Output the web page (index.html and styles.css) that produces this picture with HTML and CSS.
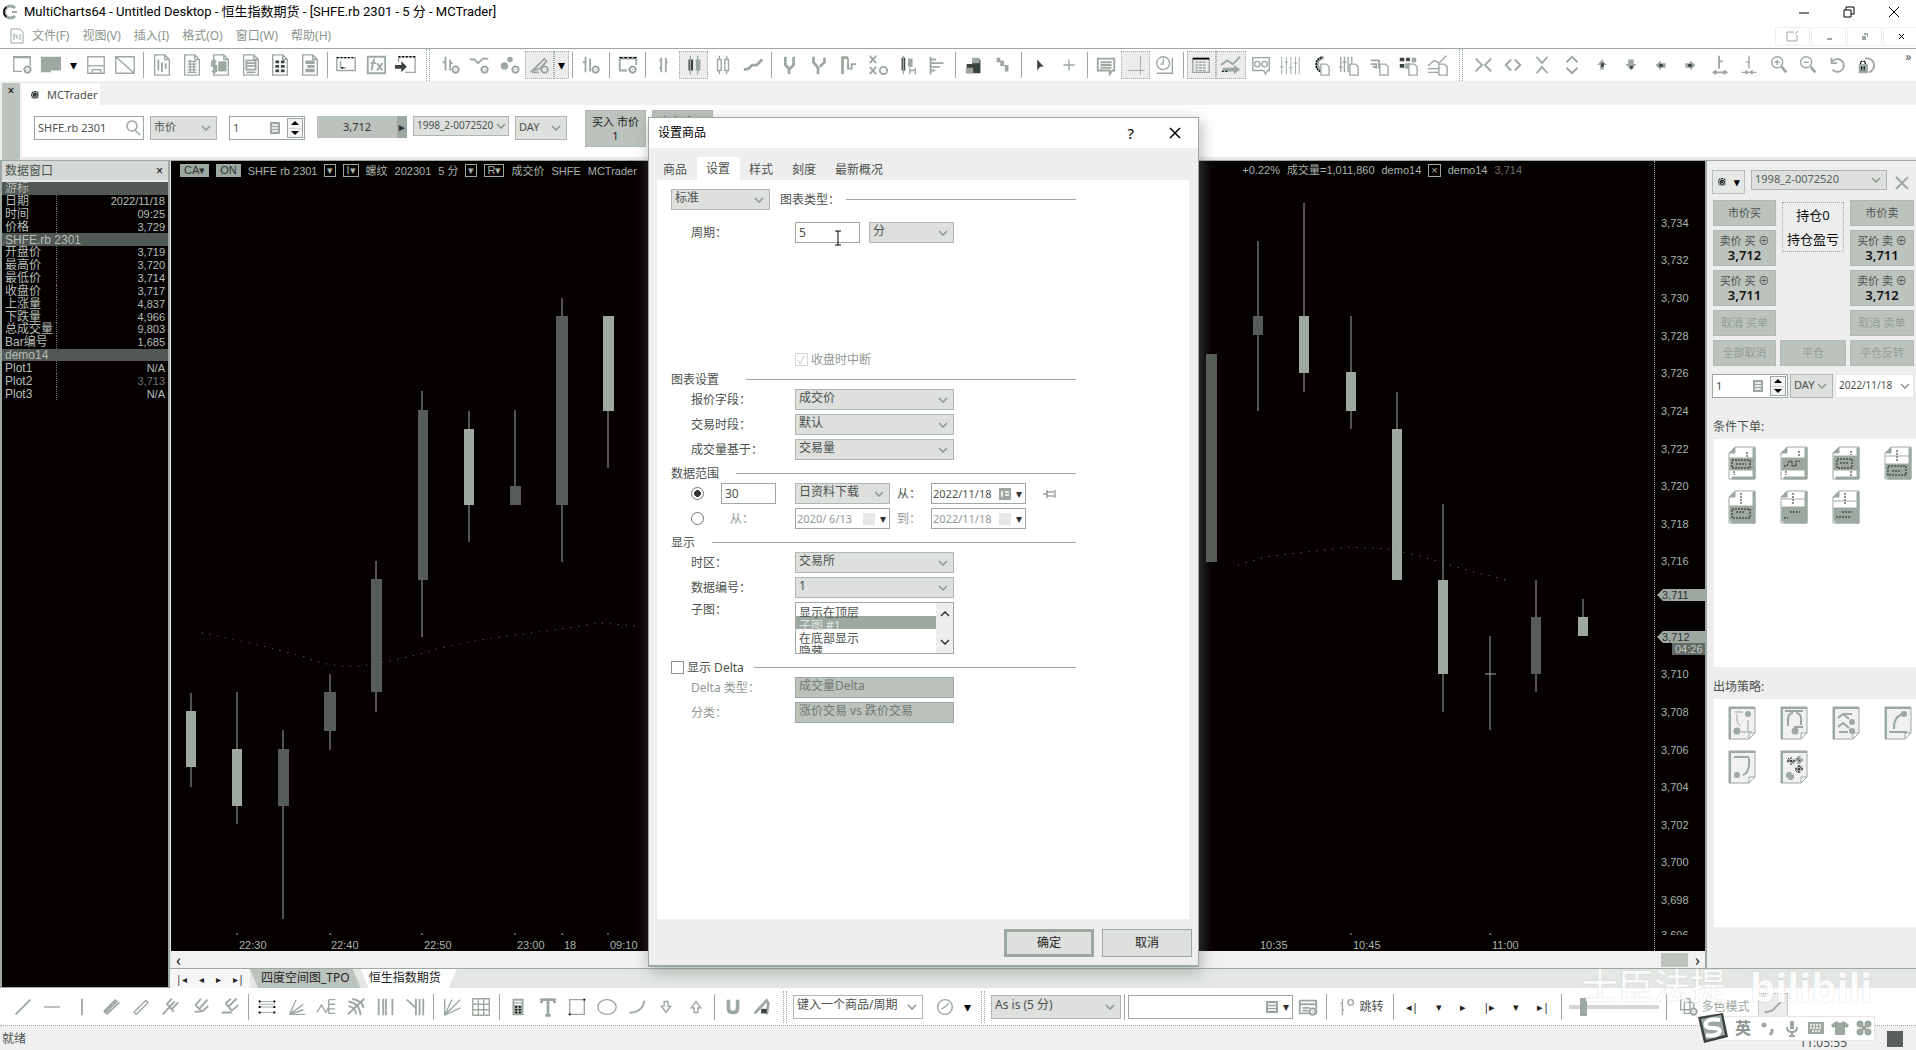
FILE: index.html
```html
<!DOCTYPE html>
<html lang="zh-CN">
<head>
<meta charset="utf-8">
<title>MultiCharts64</title>
<link rel="stylesheet" href="styles.css">
</head>
<body>
<svg class="defs" aria-hidden="true">
  <symbol id="doc" viewBox="0 0 24 24"><path d="M4 1h11l5 5v17H4zM15 1v5h5"/></symbol>
  <symbol id="gear" viewBox="0 0 24 24"><circle class="f" cx="17" cy="17" r="4.500"/><circle class="w" cx="17" cy="17" r="1.500"/></symbol>
  <symbol id="page" viewBox="0 0 24 24"><path class="wf" d="M13 11h6l3 3v9h-9z"/></symbol>
  <symbol id="cond" viewBox="0 0 28 34"><path class="wf" d="M7 1h20v32H1V7z"/><path class="f2" d="M7 1v6H1zM25 2h2v31H4v-2h21z"/></symbol>
  <symbol id="exit" viewBox="0 0 28 34"><path class="paper" d="M1 1h26v26l-6 6H1z"/><path class="f" d="M1 1h26v2H3v30H1z"/><path class="wf" d="M21 33v-6h6z"/></symbol>
  <symbol id="target" viewBox="0 0 10 10"><circle class="f" cx="5" cy="5" r="4"/><path d="M5 1v8M1 5h8M2 2l6 6M8 2 2 8" stroke-dasharray="1"/></symbol>
</svg>
<div class="app">
  <header class="titlebar">
    <svg class="logo" viewBox="0 0 16 16"><path d="M13 4A6 6 0 1 0 13 12" stroke-width="3"/><path class="k" d="M4 3 2 6v4l2 3" /><path d="M10 8h5" stroke-width="2"/></svg>
    <h1>MultiCharts64 - Untitled Desktop - 恒生指数期货 - [SHFE.rb 2301 - 5 分 - MCTrader]</h1>
    <div class="winbtns">
      <button><svg viewBox="0 0 12 12"><path d="M1 7h10"/></svg></button>
      <button><svg viewBox="0 0 12 12"><path d="M1 4h7v7H1zM3 4V1h8v7H8"/></svg></button>
      <button><svg viewBox="0 0 12 12"><path d="m1 1 10 10M11 1 1 11"/></svg></button>
    </div>
  </header>
  <nav class="menubar">
    <svg class="menuicon" viewBox="0 0 14 16"><path d="M1 1h9l3 3v11H1zM4 5v7M7 7v4M10 6v6M4 8h3"/></svg>
    <a href="#">文件(F)</a><a href="#">视图(V)</a><a href="#">插入(I)</a><a href="#">格式(O)</a><a href="#">窗口(W)</a><a href="#">帮助(H)</a>
    <div class="mdibtns">
      <button><svg viewBox="0 0 14 12"><path d="M8 2H1v9h10V5M9 4l3-3"/></svg></button>
      <button><svg viewBox="0 0 14 12"><path d="M5 9h5" stroke-width="2"/></svg></button>
      <button><svg viewBox="0 0 14 12"><path class="f" d="M4 6h4v4H4zM6 3h4v4H9V5H6z"/></svg></button>
      <button><svg viewBox="0 0 14 12"><path class="k" d="m5 4 5 5M10 4 5 9"/></svg></button>
    </div>
  </nav>
  <div class="toolbar top">
    <button class="tb"><svg viewBox="0 0 24 24"><path d="M21 13V3H3v16h9M3 4h18"/><use href="#gear" x="1"/></svg></button>
    <button class="tb"><svg viewBox="0 0 24 24"><path class="f" d="M1 3h22v15H12v2H1z"/></svg></button>
    <button class="drop">▾</button>
    <button class="tb"><svg viewBox="0 0 24 24"><path d="M3 3h18v18H3zM3 13h18M8 21v-4h9v4"/></svg></button>
    <button class="tb"><svg viewBox="0 0 24 24"><path d="M2 3h20v18H2zM2 3l20 18"/></svg></button>
    <i class="sep"></i>
    <button class="tb"><svg viewBox="0 0 24 24"><use href="#doc"/><path d="M8 6v12M12 9v11M16 10v6" stroke-width="2"/></svg></button>
    <button class="tb"><svg viewBox="0 0 24 24"><use href="#doc"/><path d="M7 8h10M7 11h10M7 14h10M7 17h10M7 20h10M10 6v15M14 8v13"/></svg></button>
    <button class="tb"><svg viewBox="0 0 24 24"><use href="#doc"/><path class="f" d="M9 8h9v11H9z"/><path d="M7 8H2v5h5v6H2M5 6v15" stroke-width="2"/></svg></button>
    <button class="tb"><svg viewBox="0 0 24 24"><use href="#doc"/><path d="M7 7h10v10H7zM7 10h10M7 13h10M7 20h10" stroke-width="2"/></svg></button>
    <button class="tb"><svg viewBox="0 0 24 24"><use href="#doc"/><path class="kf" d="M7 7h4v3H7zM13 7h4v3h-4zM7 12h4v3H7zM13 12h4v3h-4zM7 17h4v3H7zM13 17h4v3h-4z"/></svg></button>
    <button class="tb"><svg viewBox="0 0 24 24"><use href="#doc"/><path class="f" d="M7 7h10v4H7zM9 12h8v3H9zM7 16h10v4H7z"/></svg></button>
    <i class="sep"></i>
    <button class="tb"><svg viewBox="0 0 24 24"><path d="M2 4h20v14H2zM6 8v7h6"/><path class="k" d="M2 4h20M7 15h4" stroke-dasharray="2"/></svg></button>
    <button class="tb"><svg viewBox="0 0 24 24"><path d="M3 3h19v18H3zM11 6c-3 0-2 5-4 12M6 10h6M13 10l6 8M19 10l-6 8" stroke-width="2"/></svg></button>
    <button class="tb"><svg viewBox="0 0 24 24"><path d="M5 9V3h18v17H12"/><path class="k" d="M5 3h18" stroke-dasharray="2"/><path class="kf" d="M1 12h7V8l6 6-6 6v-4H1z"/></svg></button>
    <i class="sep2"></i>
    <button class="tb"><svg viewBox="0 0 24 24"><path d="M6 3v15M11 6v12M3 9h3M11 10h3" stroke-width="2"/><use href="#gear"/></svg></button>
    <button class="tb"><svg viewBox="0 0 24 24"><path d="M1 6h5l4 4 5-5h6" stroke-width="2"/><use href="#gear"/></svg></button>
    <button class="tb"><svg viewBox="0 0 24 24"><circle class="f" cx="12" cy="6" r="3"/><circle class="f" cx="6" cy="13" r="4"/><use href="#gear" x="1"/></svg></button>
    <button class="tb on"><svg viewBox="0 0 24 24"><path d="m4 18 13-13 2 3-7 8zM3 20h8" stroke-width="2"/><use href="#gear"/></svg></button>
    <button class="drop on">▾</button>
    <i class="sep"></i>
    <button class="tb"><svg viewBox="0 0 24 24"><path d="M6 3v17M11 5v14M3 9h3" stroke-width="2"/><use href="#gear"/></svg></button>
    <i class="sep"></i>
    <button class="tb"><svg viewBox="0 0 24 24"><path d="M21 12V4H3v14h8M3 5h18" stroke-width="2"/><path class="k" d="M3 4h18" stroke-dasharray="3 2"/><use href="#gear"/></svg></button>
    <i class="sep"></i>
    <button class="tb"><svg viewBox="0 0 24 24"><path d="M9 4v16M14 4v16M7 7h2M7 15h2M14 9h2" stroke-width="2"/></svg></button>
    <button class="tb on"><svg viewBox="0 0 24 24"><path class="kf" d="M6 6h5v12H6z"/><path class="f" d="M14 6h5v12h-5z"/><path d="M8 2v20M16 2v20"/></svg></button>
    <button class="tb"><svg viewBox="0 0 24 24"><path d="M6 6h4v12H6zM14 6h4v12h-4zM8 2v4M8 18v4M16 2v4M16 18v4"/></svg></button>
    <button class="tb"><svg viewBox="0 0 24 24"><path d="m2 17 5-1 4-4 5 0 6-6" stroke-width="3"/></svg></button>
    <i class="sep"></i>
    <button class="tb"><svg viewBox="0 0 24 24"><path d="M8 3v9l4 4M17 3v9l-4 4" stroke-width="3"/><path d="M12 14v8" stroke-width="3"/></svg></button>
    <button class="tb"><svg viewBox="0 0 24 24"><path d="M6 3v6l5 6v7M18 4v5l-5 5" stroke-width="3"/></svg></button>
    <button class="tb"><svg viewBox="0 0 24 24"><path d="M6 22V4h6" stroke-width="3"/><path d="M12 4v12h4v-5h5" stroke-width="2"/></svg></button>
    <button class="tb"><svg viewBox="0 0 24 24"><path d="m3 2 7 8M10 2 3 10M3 14l7 8M10 14l-7 8" stroke-width="2"/><circle cx="18" cy="18" r="4" stroke-width="2"/></svg></button>
    <button class="tb"><svg viewBox="0 0 24 24"><path class="kf" d="M5 4h4v14H5z"/><path class="f" d="M12 5h5v9h-5z"/><path d="M7 2v20M14 15v7M20 15v7M14 18h6"/></svg></button>
    <button class="tb"><svg viewBox="0 0 24 24"><path d="M5 3v19M5 6h6M5 10h14M5 14h10M5 18h5" stroke-width="2"/></svg></button>
    <i class="sep"></i>
    <button class="tb"><svg viewBox="0 0 24 24"><path class="kf" d="M4 11h6V6h9v15H4z"/><path class="f" d="M10 4h8v6h-8zM3 15h8v6H3z"/></svg></button>
    <button class="tb"><svg viewBox="0 0 24 24"><path class="f" d="M5 4h4v3h4v5h5v7h-4v-6H9V9H5z"/></svg></button>
    <i class="sep"></i>
    <button class="tb"><svg viewBox="0 0 24 24"><path class="kf" d="m9 6 7 8h-4l-3 4z"/></svg></button>
    <button class="tb"><svg viewBox="0 0 24 24"><path d="M12 6v12M6 12h12"/></svg></button>
    <i class="sep"></i>
    <button class="tb"><svg viewBox="0 0 24 24"><path d="M3 5h18v13h-2l-3 4v-4H3zM6 9h12M6 12h12M6 15h12" stroke-width="2"/></svg></button>
    <button class="tb on"><svg viewBox="0 0 24 24"><path d="M18 2v20M4 18h18" stroke-width="1"/></svg></button>
    <button class="tb"><svg viewBox="0 0 24 24"><circle cx="10" cy="10" r="7"/><path d="M10 5v6H7M3 21h18M20 4v18"/></svg></button>
    <i class="sep"></i>
    <button class="tb on"><svg viewBox="0 0 24 24"><path d="M3 5h18v15H3z"/><path class="k" d="M3 5h18" stroke-width="2"/><path d="M6 9h12M6 12h12M6 15h12M6 18h12" stroke-dasharray="3 1"/></svg></button>
    <button class="tb on"><svg viewBox="0 0 24 24"><path d="m1 12 7-5 6 4 8-8" stroke-width="2"/><path class="f" d="M3 15h12v-3l7 5-7 5v-3H3z"/><path class="k" d="M2 19h8" stroke-dasharray="2"/></svg></button>
    <button class="tb"><svg viewBox="0 0 24 24"><path d="M3 4h18v14h-2l-2 4-2-4H3z"/><circle cx="8" cy="11" r="3"/><circle cx="16" cy="11" r="3"/></svg></button>
    <button class="tb"><svg viewBox="0 0 24 24"><path d="M3 3v19M8 3v19M13 3v19M18 3v19M22 3v19M1 14h4M6 9h4M11 15h4M16 10h4" stroke-width="1"/></svg></button>
    <button class="tb"><svg viewBox="0 0 24 24"><path d="M16 4c-9 0-9 12-2 15" stroke-width="4"/><path class="k" d="M14 4c-8 1-8 12-2 15" stroke-dasharray="2 1"/><use href="#page"/></svg></button>
    <button class="tb"><svg viewBox="0 0 24 24"><path d="M3 3v17M7 3v17M11 3v17M15 3v9M1 14h4M5 9h4"/><use href="#page"/></svg></button>
    <button class="tb"><svg viewBox="0 0 24 24"><path d="M3 7h9v9M3 11h6v5M5 14h4" stroke-width="2"/><use href="#page"/></svg></button>
    <button class="tb"><svg viewBox="0 0 24 24"><path class="kf" d="M3 4h5v4H3zM10 4h4v4h-4zM3 11h5v4H3z"/><path class="f" d="M16 4h5v5h-5zM9 10h5v6H9z"/><use href="#page"/></svg></button>
    <button class="tb"><svg viewBox="0 0 24 24"><path d="m1 13 7-6 5 3 8-8M1 16h12M1 20h12"/><use href="#page"/></svg></button>
    <i class="sep2"></i>
    <button class="tb"><svg viewBox="0 0 24 24"><path d="m4 5 7 7-7 7M21 5l-7 7 7 7" stroke-width="2"/></svg></button>
    <button class="tb"><svg viewBox="0 0 24 24"><path d="m10 6-6 6 6 6M14 6l6 6-6 6" stroke-width="2"/></svg></button>
    <button class="tb"><svg viewBox="0 0 24 24"><path d="m6 3 6 7 6-7M6 21l6-7 6 7" stroke-width="2"/></svg></button>
    <button class="tb"><svg viewBox="0 0 24 24"><path d="m6 9 6-6 6 6M6 15l6 6 6-6" stroke-width="2"/></svg></button>
    <button class="tb"><svg viewBox="0 0 24 24"><path class="f" d="m12 6 5 6h-3v5h-4v-5H7z"/><path class="kf" d="M11 10h3v4h-3z"/></svg></button>
    <button class="tb"><svg viewBox="0 0 24 24"><path class="f" d="M9 6h6v5h3l-6 7-6-7h3z"/><path class="kf" d="M11 13h3v3h-3z"/></svg></button>
    <button class="tb"><svg viewBox="0 0 24 24"><path class="f" d="m6 12 6-5v3h5v5h-5v3z"/><path class="kf" d="M10 11h4v3h-4z"/></svg></button>
    <button class="tb"><svg viewBox="0 0 24 24"><path class="f" d="m18 12-6-5v3H7v5h5v3z"/><path class="kf" d="M10 11h4v3h-4z"/></svg></button>
    <button class="tb"><svg viewBox="0 0 24 24"><path d="M11 2v14M11 8h4M5 20h14M8 18l-3 2 3 2M16 18l3 2-3 2" stroke-width="2"/></svg></button>
    <button class="tb"><svg viewBox="0 0 24 24"><path d="M12 2v14M9 9h3M4 20h6M14 20h6M8 18l3 2-3 2M16 18l-3 2 3 2"/></svg></button>
    <button class="tb"><svg viewBox="0 0 24 24"><circle cx="10" cy="9" r="6"/><path d="M10 6v6M7 9h6"/><path d="m15 14 5 6" stroke-width="3"/></svg></button>
    <button class="tb"><svg viewBox="0 0 24 24"><circle cx="10" cy="9" r="6"/><path d="M7 9h6"/><path d="m15 14 5 6" stroke-width="3"/></svg></button>
    <button class="tb"><svg viewBox="0 0 24 24"><path d="M5 4v6h6M6 8a7 7 0 1 1 0 9" stroke-width="2"/></svg></button>
    <button class="tb"><svg viewBox="0 0 24 24"><path class="f" d="M3 11h10v10H3z"/><path class="k" d="M5 11V8h5v3M6 14v4M9 14v4" stroke-dasharray="2 1"/><path d="M10 5a7 7 0 1 1 4 15" stroke-width="2"/></svg></button>
    <span class="more">»</span>
  </div>
  <section class="trader">
    <div class="strip"><button>×</button></div>
    <div class="tradermain">
      <div class="tabstrip"><a href="#" class="tab"><svg viewBox="0 0 10 10"><use href="#target"/></svg>MCTrader</a></div>
      <div class="orderbar">
        <div class="pair">
          <div class="field search"><input aria-label="symbol" value="SHFE.rb 2301"><svg viewBox="0 0 16 16"><circle cx="7" cy="6" r="5"/><path d="m10 10 5 5"/></svg></div>
          <select class="sel w67" aria-label="order type"><option>市价</option></select>
        </div>
        <div class="field spin w76"><input aria-label="quantity" value="1"><svg viewBox="0 0 12 14"><path class="f" d="M1 1h10v12H1z"/><path class="w" d="M3 4h6M3 7h6M3 10h6"/></svg><span class="updown"><button><svg viewBox="0 0 8 4"><path d="M0 4 4 0l4 4z"/></svg></button><button><svg viewBox="0 0 8 4"><path d="m0 0 4 4 4-4z"/></svg></button></span></div>
        <div class="pair">
          <button class="pricebtn"><span>3,712</span><b>▸</b></button>
          <select class="sel short acct w96" aria-label="account"><option>1998_2-0072520</option></select>
          <select class="sel w52" aria-label="duration"><option>DAY</option></select>
        </div>
        <div class="pair">
          <button class="bigbtn">买入 市价<b>1</b></button>
          <button class="bigbtn">卖出 市价<b>1</b></button>
        </div>
      </div>
    </div>
  </section>
  <main class="workspace">
    <aside class="datawin">
      <div class="dwhead"><h2>数据窗口</h2><button>×</button></div>
      <table>
        <tr class="g"><th colspan="2">游标</th></tr>
        <tr><th>日期</th><td>2022/11/18</td></tr>
        <tr><th>时间</th><td>09:25</td></tr>
        <tr><th>价格</th><td>3,729</td></tr>
        <tr class="g"><th colspan="2">SHFE.rb 2301</th></tr>
        <tr><th>开盘价</th><td>3,719</td></tr>
        <tr><th>最高价</th><td>3,720</td></tr>
        <tr><th>最低价</th><td>3,714</td></tr>
        <tr><th>收盘价</th><td>3,717</td></tr>
        <tr><th>上涨量</th><td>4,837</td></tr>
        <tr><th>下跌量</th><td>4,966</td></tr>
        <tr><th>总成交量</th><td>9,803</td></tr>
        <tr><th>Bar编号</th><td>1,685</td></tr>
        <tr class="g"><th colspan="2">demo14</th></tr>
        <tr><th>Plot1</th><td>N/A</td></tr>
        <tr><th>Plot2</th><td class="dim">3,713</td></tr>
        <tr><th>Plot3</th><td>N/A</td></tr>
      </table>
    </aside>
    <div class="center">
      <div class="upper">
        <section class="chart">
          <div class="plotrow">
            <div class="plot">
              <div class="legend">
                <span class="tag">CA▾</span><span class="tag">ON</span><span>SHFE rb 2301</span><span class="bx">▾</span><span class="bx">I▾</span><span>螺纹</span><span>202301</span><span>5 分</span><span class="bx">▾</span><span class="bx">R▾</span><span>成交价</span><span>SHFE</span><span>MCTrader</span>
                <div class="legend2"><span>+0.22%</span><span>成交量=1,011,860</span><span>demo14</span><span class="bx">×</span><span>demo14</span><span class="dim">3,714</span></div>
              </div>
              <svg class="candles" viewBox="171 180 1484 771" preserveAspectRatio="xMinYMin slice">
                <g class="wick">
                  <path d="M191 693V787M237 692V824M283 730V919M330 674V750M376 561V712M422 391V637M469 411V542M515 410V486M562 298V562M608 316V468M1258 241V411M1304 203V392M1351 316V429M1397 392V580M1443 504V712M1490 636V730M1485 674h11M1536 580V692M1583 599V636"/>
                </g>
                <g class="down">
                  <path d="M186 711h10v56h-10zM232 749h10v57h-10zM464 429h10v76h-10zM603 316h11v95h-11zM1299 316h10v57h-10zM1346 372h10v39h-10zM1392 429h10v151h-10zM1438 580h10v94h-10zM1578 617h10v19h-10z"/>
                </g>
                <g class="up">
                  <path d="M278 749h11v57h-11zM324 692h12v39h-12zM371 579h11v113h-11zM418 410h10v170h-10zM510 486h11v19h-11zM556 316h12v189h-12zM1206 354h11v208h-11zM1253 316h10v19h-10zM1531 617h10v57h-10z"/>
                </g>
                <path class="ma" d="M202 633Q250 642 305 657Q330 668 360 666Q400 660 430 651T515 635T600 623L635 626M1238 565 1265 557 1350 547 1390 549 1420 556 1470 571 1506 580"/>
                <path class="wick" d="M237 933v2M330 933v2M422 933v2M515 933v2M562 933v2M608 933v2M1351 933v2M1490 933v2"/>
                <g class="times"><text x="239" y="949">22:30</text><text x="331" y="949">22:40</text><text x="424" y="949">22:50</text><text x="517" y="949">23:00</text><text x="564" y="949">18</text><text x="610" y="949">09:10</text><text x="1260" y="949">10:35</text><text x="1353" y="949">10:45</text><text x="1492" y="949">11:00</text></g>
              </svg>
            </div>
            <div class="axis">
              <ol><li>3,734</li><li>3,732</li><li>3,730</li><li>3,728</li><li>3,726</li><li>3,724</li><li>3,722</li><li>3,720</li><li>3,718</li><li>3,716</li><li></li><li></li><li>3,710</li><li>3,708</li><li>3,706</li><li>3,704</li><li>3,702</li><li>3,700</li><li>3,698</li></ol>
              <div class="cut">3,696</div>
              <span class="ptag t1">3,711</span><span class="ptag t2">3,712</span><span class="count">04:26</span>
            </div>
          </div>
          <div class="hscroll"><button>‹</button><span></span><button>›</button></div>
        </section>
        <aside class="dom">
          <div class="domtop">
            <button class="tbtn"><svg viewBox="0 0 10 10"><use href="#target"/></svg><b>▾</b></button>
            <select class="sel short" aria-label="account"><option>1998_2-0072520</option></select>
            <button class="x"><svg viewBox="0 0 14 14"><path d="m1 1 12 12M13 1 1 13"/></svg></button>
          </div>
          <div class="domgrid">
            <button class="b">市价买</button><div class="pos"><span>持仓0</span><span>持仓盈亏</span></div><button class="b">市价卖</button>
            <button class="b">卖价 买 ⊕<b>3,712</b></button><button class="b">买价 卖 ⊕<b>3,711</b></button>
            <button class="b">买价 买 ⊕<b>3,711</b></button><button class="b c3">卖价 卖 ⊕<b>3,712</b></button>
            <button class="b" disabled>取消 买单</button><button class="b c3" disabled>取消 卖单</button>
            <button class="b" disabled>全部取消</button><button class="b" disabled>平仓</button><button class="b" disabled>平仓反转</button>
          </div>
          <div class="domqty">
            <div class="field spin w76"><input aria-label="quantity" value="1"><svg viewBox="0 0 12 14"><path class="f" d="M1 1h10v12H1z"/><path class="w" d="M3 4h6M3 7h6M3 10h6"/></svg><span class="updown"><button><svg viewBox="0 0 8 4"><path d="M0 4 4 0l4 4z"/></svg></button><button><svg viewBox="0 0 8 4"><path d="m0 0 4 4 4-4z"/></svg></button></span></div>
            <select class="sel" aria-label="duration"><option>DAY</option></select>
            <select class="sel white" aria-label="date"><option>2022/11/18</option></select>
          </div>
          <h3>条件下单:</h3>
          <div class="palette">
            <svg viewBox="0 0 28 34"><use href="#cond"/><path class="f2" d="M2 12h24v12H2z"/><path class="kd" d="M4 14h18v8H4zM19 6v5M6 25v4M8 18h10"/></svg>
            <svg viewBox="0 0 28 34"><use href="#cond"/><path class="f2" d="M2 12h24v12H2z"/><path class="kd" d="M4 20h3l2-5h3v5h4v-5h4M19 5v5M6 25v4"/></svg>
            <svg viewBox="0 0 28 34"><use href="#cond"/><path class="f2" d="M2 10h24v14H2z"/><path class="kd" d="M5 13h15v9H5zM19 5v4M19 25v5M8 17h9"/></svg>
            <svg viewBox="0 0 28 34"><use href="#cond"/><path class="f2" d="M2 18h24v13H2z"/><path class="kd" d="M4 20h18v9H4zM13 4v11M8 25h9"/><path d="M2 10h24"/></svg>
            <svg viewBox="0 0 28 34"><use href="#cond"/><path class="f2" d="M2 16h24v15H2z"/><path class="kd" d="M4 19h18v9H4zM13 3v12M8 22h9"/></svg>
            <svg viewBox="0 0 28 34"><use href="#cond"/><path class="f2" d="M2 17h24v14H2z"/><path class="kd" d="M4 28h4M10 22h10M13 3v12"/><path d="M2 9h24"/></svg>
            <svg viewBox="0 0 28 34"><use href="#cond"/><path class="f2" d="M2 18h24v13H2z"/><path class="kd" d="M4 27h14M10 22h10M13 3v12"/><path d="M2 11h24"/></svg>
          </div>
          <h3>出场策略:</h3>
          <div class="palette">
            <svg viewBox="0 0 28 34"><use href="#exit"/><path d="M7 6h8M9 8q-1 9 3 12M13 26h11M20 14v11"/><circle class="f" cx="20" cy="8" r="3"/><circle class="f" cx="9" cy="25" r="3.500"/></svg>
            <svg viewBox="0 0 28 34"><use href="#exit"/><path d="M5 5h18M8 20V14q0-7 5-7M14 21h9M21 19v-6q0-6-5-6" stroke-width="2"/><circle class="f" cx="15" cy="25" r="3.500"/></svg>
            <svg viewBox="0 0 28 34"><use href="#exit"/><path d="m6 12 5-4 6 5M10 8h10M6 21l5-4 6 5M7 26h9" stroke-width="2"/><circle class="f" cx="20" cy="16" r="3"/><circle class="f" cx="20" cy="25" r="3"/></svg>
            <svg viewBox="0 0 28 34"><use href="#exit"/><path d="M18 8q-9 4-8 15M5 26h18" stroke-width="2"/><circle class="f" cx="20" cy="8" r="3"/></svg>
            <svg viewBox="0 0 28 34"><use href="#exit"/><path d="M6 7h15M21 8q1 15-6 17" stroke-width="2"/><circle class="f" cx="9" cy="25" r="3"/></svg>
            <svg viewBox="0 0 28 34"><use href="#exit"/><path d="M15 10h8M19 6v8M6 26h8M10 22v8M7 23l6 6M7 11h8M15 19h8M19 15v8" stroke-width="3"/><path class="kd" d="M7 11h8M11 7v8M8 8l6 6M15 19h8M19 15v8M16 22l6-6M17 8l4 4"/></svg>
          </div>
        </aside>
      </div>
      <nav class="sheets">
        <div class="nav"><button>|◂</button><button>◂</button><button>▸</button><button>▸|</button></div>
        <a href="#" class="sheet">四度空间图_TPO</a><a href="#" class="sheet cur">恒生指数期货</a>
      </nav>
    </div>
  </main>
  <footer class="toolbar bottom">
    <div class="draw">
      <button class="tb"><svg viewBox="0 0 24 24"><path d="M4 20 20 4" stroke-width="2"/></svg></button>
      <button class="tb"><svg viewBox="0 0 24 24"><path d="M3 12h18"/></svg></button>
      <button class="tb"><svg viewBox="0 0 24 24"><path d="M12 3v18" stroke-width="2"/></svg></button>
      <button class="tb"><svg viewBox="0 0 24 24"><path d="M3 17 16 4M6 20 20 7M4 19 18 5" stroke-width="2"/></svg></button>
      <button class="tb"><svg viewBox="0 0 24 24"><path d="M4 18 17 5M7 20 20 7M4 18l3 2M17 5l3 2"/></svg></button>
      <button class="tb"><svg viewBox="0 0 24 24"><path d="m3 20 13-14M7 8l8 9M8 8l5-5M13 14l7-7M10 12l6-6" stroke-width="2"/></svg></button>
      <button class="tb"><svg viewBox="0 0 24 24"><path d="m6 10 7 7M6 10l6-7M10 14l9-10M13 17l7-6M5 17h7" stroke-width="2"/></svg></button>
      <button class="tb"><svg viewBox="0 0 24 24"><path d="m7 8 7 8M7 8l6-5M10 12l9-9M14 16l7-6M3 18h11" stroke-width="2"/></svg></button>
      <i class="sep"></i>
      <button class="tb"><svg viewBox="0 0 24 24"><path d="M3 6h18M3 12h18M3 18h18M3 9h18" stroke-width="1"/><path class="k" d="M3 6h2M19 6h2M3 12h2M19 12h2M3 18h2M19 18h2" stroke-width="2"/></svg></button>
      <button class="tb"><svg viewBox="0 0 24 24"><path d="M4 20 11 4M4 20 19 9M4 20h17M4 20 19 15"/></svg></button>
      <button class="tb"><svg viewBox="0 0 24 24"><path d="m2 18 5-8 5 8 3-6M15 4v15M15 4h7M15 9h7M15 14h7M15 19h7"/></svg></button>
      <button class="tb"><svg viewBox="0 0 24 24"><path d="M3 20 21 3M4 6q12 2 13 15M4 11q8 2 8 9M8 3q12 3 12 10" stroke-width="2"/></svg></button>
      <button class="tb"><svg viewBox="0 0 24 24"><path d="M4 3v18M9 3v18M12 3v18M19 3v18" stroke-width="2"/></svg></button>
      <button class="tb"><svg viewBox="0 0 24 24"><path d="m3 4 10 9V3M13 13v8M17 3v18M21 3v18" stroke-width="2"/></svg></button>
      <i class="sep"></i>
      <button class="tb"><svg viewBox="0 0 24 24"><path d="M4 21V3M4 21 12 4M4 21 21 4M4 21l17-8"/></svg></button>
      <button class="tb"><svg viewBox="0 0 24 24"><path d="M3 3h18v18H3zM9 3v18M15 3v18M3 9h18M3 15h18"/></svg></button>
      <i class="sep"></i>
      <button class="tb"><svg viewBox="0 0 24 24"><path class="f" d="M6 3h12v18H6z"/><path class="w" d="M8 6h8M8 9h8"/><path class="k" d="M9 12h6M9 15h6M9 18h6" stroke-dasharray="2"/></svg></button>
      <button class="tb"><svg viewBox="0 0 24 24"><path d="M5 8V4h14v4M12 4v17M9 21h6" stroke-width="3"/></svg></button>
      <button class="tb"><svg viewBox="0 0 24 24"><path d="M4 4h16v16H4z"/><path class="k" d="M3 20h2M19 4h2" stroke-width="2"/></svg></button>
      <button class="tb"><svg viewBox="0 0 24 24"><ellipse cx="12" cy="12" rx="10" ry="8"/></svg></button>
      <button class="tb"><svg viewBox="0 0 24 24"><path d="M4 18q14 0 16-13" stroke-width="2"/></svg></button>
      <button class="tb"><svg viewBox="0 0 24 24"><path d="M10 6h4v5h3l-5 7-5-7h3z"/></svg></button>
      <button class="tb"><svg viewBox="0 0 24 24"><path d="M10 18h4v-5h3l-5-7-5 7h3z"/></svg></button>
      <i class="sep"></i>
      <button class="tb"><svg viewBox="0 0 24 24"><path d="M7 4v9q0 5 5 5t5-5V4" stroke-width="4"/></svg></button>
      <button class="tb"><svg viewBox="0 0 24 24"><path d="m4 19 13-14 2 3-2 12" stroke-width="3"/><path class="kf" d="M11 14h6v5h-6z"/></svg></button>
    </div>
    <i class="sep2"></i>
    <select class="sel white quick w130" aria-label="symbol"><option>键入一个商品/周期</option></select>
    <button class="tb fixed"><svg viewBox="0 0 24 24"><circle cx="12" cy="12" r="8"/><path d="m8 14 4-2 4-4"/></svg></button>
    <button class="drop">▾</button>
    <i class="sep2"></i>
    <select class="sel w130" aria-label="resolution"><option>As is (5 分)</option></select>
    <i class="sep"></i>
    <div class="field date w165"><input aria-label="jump date"><svg viewBox="0 0 14 14"><path class="f" d="M1 1h12v12H1z"/><path class="w" d="M3 4h8M3 7h8M3 10h8"/></svg><b>▾</b></div>
    <button class="tb fixed"><svg viewBox="0 0 24 24"><path d="M3 5h18v14H3zM3 9h18M6 13h8M6 16h6" stroke-width="2"/><use href="#gear"/></svg></button>
    <i class="sep"></i>
    <button class="jump"><svg viewBox="0 0 24 24"><path d="M7 3v18M5 8h2M7 15h2"/><circle cx="16" cy="7" r="3"/></svg>跳转</button>
    <i class="sep"></i>
    <div class="play"><button>◂|</button><button>▾</button><button>▸</button><button>|▸</button><button>▾</button><button>▸|</button></div>
    <i class="sep"></i>
    <input class="slider" type="range" aria-label="speed" min="0" max="100" value="16">
    <i class="sep"></i>
    <button class="mode"><svg viewBox="0 0 24 24"><path d="M3 3h10v12H3zM7 7h10v12H7z"/><use href="#gear"/></svg>多色模式</button>
    <button class="tb fixed on"><svg viewBox="0 0 24 24"><path d="m3 18 8-2 10-10" stroke-width="2"/></svg></button>
  </footer>
  <div class="status"><span>就绪</span><span class="clock">11:05:55</span><i class="grip"></i></div>
</div>

<form class="dialog">
  <header><h2>设置商品</h2><button type="button">?</button><button type="button"><svg viewBox="0 0 12 12"><path d="m1 1 10 10M11 1 1 11"/></svg></button></header>
  <nav class="dtabs"><a href="#">商品</a><a href="#" class="cur">设置</a><a href="#">样式</a><a href="#">刻度</a><a href="#">最新概况</a></nav>
  <div class="dpage">
    <div class="row head1"><select class="sel w99" id="std"><option>标准</option></select><label for="std">图表类型：</label><hr></div>
    <div class="row period"><label class="lab" for="per">周期：</label><span class="perbox"><input class="txt w65" id="per" value="5"><svg class="ibeam" viewBox="0 0 8 16"><path d="M1 1h6M4 1v14M1 15h6"/></svg></span><select class="sel w85" aria-label="unit"><option>分</option></select></div>
    <div class="row brk"><label class="dis"><input type="checkbox" class="chk" checked disabled>收盘时中断</label></div>
    <div class="sect"><span>图表设置</span><hr class="a"></div>
    <div class="rows">
      <div class="row"><label class="lab" for="f1">报价字段：</label><select class="sel w159" id="f1"><option>成交价</option></select></div>
      <div class="row"><label class="lab" for="f2">交易时段：</label><select class="sel w159" id="f2"><option>默认</option></select></div>
      <div class="row"><label class="lab" for="f3">成交量基于：</label><select class="sel w159" id="f3"><option>交易量</option></select></div>
    </div>
    <div class="sect"><span>数据范围</span><hr class="b1"></div>
    <div class="rows">
      <div class="row range"><input type="radio" name="r" class="rad" aria-label="days back" checked><input class="txt w55" aria-label="days" value="30"><select class="sel w95" aria-label="kind"><option>日资料下载</option></select><label class="to" for="d1">从：</label><span class="field date w95"><input id="d1" value="2022/11/18"><svg viewBox="0 0 14 14"><path class="f" d="M1 1h12v12H1z"/><path class="w" d="M4 4v6M7 5h4M7 8h4"/></svg><b>▾</b></span><svg class="pin" viewBox="0 0 14 10"><path d="M0 5h4M4 1v8M4 3h7M4 7h7M12 1v8"/></svg></div>
      <div class="row range off"><input type="radio" name="r" class="rad" aria-label="from date"><label class="w55 from" for="d2">从：</label><span class="field date w95"><input id="d2" value="2020/ 6/13"><svg viewBox="0 0 14 14"><path class="lf" d="M1 1h12v12H1z"/></svg><b>▾</b></span><label class="to" for="d3">到：</label><span class="field date w95"><input id="d3" value="2022/11/18"><svg viewBox="0 0 14 14"><path class="lf" d="M1 1h12v12H1z"/></svg><b>▾</b></span></div>
    </div>
    <div class="sect"><span>显示</span><hr class="b1"></div>
    <div class="rows">
      <div class="row"><label class="lab" for="f4">时区：</label><select class="sel w159" id="f4"><option>交易所</option></select></div>
      <div class="row"><label class="lab" for="f5">数据编号：</label><select class="sel w159" id="f5"><option>1</option></select></div>
      <div class="row tall"><label class="lab" for="f6">子图：</label><div class="list"><select size="4" id="f6"><option>显示在顶层</option><option selected>子图 #1</option><option>在底部显示</option><option>隐藏</option></select><span class="vs"><svg viewBox="0 0 10 6"><path d="m1 5 4-4 4 4"/></svg><svg viewBox="0 0 10 6"><path d="m1 1 4 4 4-4"/></svg></span></div></div>
    </div>
    <div class="sect"><label><input type="checkbox" class="chk">显示 Delta</label><hr class="d"></div>
    <div class="rows off">
      <div class="row"><label class="lab" for="f7">Delta 类型：</label><select class="sel w159 gray" id="f7" disabled><option>成交量Delta</option></select></div>
      <div class="row"><label class="lab" for="f8">分类：</label><select class="sel w159 gray" id="f8" disabled><option>涨价交易 vs 跌价交易</option></select></div>
    </div>
  </div>
  <div class="dbtns"><button type="button" class="ok">确定</button><button type="button">取消</button></div>
</form>

<div class="watermark"><span>士臣法提</span><b>bilibili</b></div>
<div class="ime">
  <svg class="slogo" viewBox="0 0 32 32"><path class="kf" d="m1 5 25-4 5 24L7 31z"/><path class="f" d="m4 7 20-4 4 20L9 28z"/><path class="w" d="M23 8q-12-2-14 3t7 5 6 5q-4 4-13 2" stroke-width="4"/></svg>
  <b>英</b>
  <svg viewBox="0 0 18 18"><circle class="f" cx="5" cy="6" r="2.500"/><path d="M13 10v3l-2 3" stroke-width="3"/></svg>
  <svg viewBox="0 0 18 18"><path class="f" d="M7 2h4v8H7z"/><path d="M4 8q0 5 5 5t5-5M9 13v4M6 17h6" stroke-width="2"/></svg>
  <svg viewBox="0 0 18 18"><path class="f" d="M1 3h16v12H1z"/><path class="w" d="M3 6h12M3 9h12M5 12h8" stroke-dasharray="2 1"/></svg>
  <svg viewBox="0 0 18 18"><path class="f" d="m5 2 4 2 4-2 5 4-2 3-2-1v8H4V8L2 9 0 6z"/></svg>
  <svg viewBox="0 0 18 18"><circle class="f" cx="5" cy="5" r="3.500"/><circle class="f" cx="13" cy="5" r="3.500"/><circle class="f" cx="5" cy="13" r="3.500"/><circle class="f" cx="13" cy="13" r="3.500"/><path d="m5 5 8 8M13 5l-8 8" stroke-width="3"/></svg>
</div>
</body>
</html>
```
FILE: styles.css
```css
:root {
  --sage: #9da8a0;
  --dither: #bcc3bd;
  --soft: #d3d8d4;
  --face: #eeeeee;
  --black: #050101;
  --ink: #4c524e;
}
* { box-sizing: border-box; }
body {
  margin: 0;
  font: 12px/16px "Noto Sans", "Noto Sans CJK SC", sans-serif;
  color: var(--ink);
  background: #fff;
  overflow: hidden;
}
button, input, select { font: inherit; color: inherit; margin: 0; padding: 0; border: 0; background: none; border-radius: 0; }
h1, h2, h3 { margin: 0; font: inherit; }
a { color: inherit; text-decoration: none; }
svg { fill: none; stroke: var(--sage); stroke-width: 1.5; display: block; flex: none; }
.defs { position: absolute; width: 0; height: 0; }
.f { fill: var(--sage); stroke: none; }
.f2 { fill: var(--sage); stroke: var(--sage); stroke-width: 1; }
.k { stroke: #000; }
.kf { fill: #3c423e; stroke: none; }
.kd { stroke: #222; stroke-dasharray: 2 1; }
.w { stroke: #fff; fill: none; }
.wf { fill: #fff; }
.lf { fill: #e6e8e6; stroke: none; }
.paper { fill: #f0f1f0; }

.app { display: flex; flex-direction: column; min-height: 100vh; }
.titlebar { display: flex; align-items: center; height: 24px; padding-left: 2px; gap: 6px; color: #000; }
.titlebar h1 { font: 13px/16px Roboto, "Noto Sans CJK SC", sans-serif; flex: 1; white-space: nowrap; }
.logo { width: 16px; height: 16px; }
.winbtns { display: flex; }
.winbtns button { width: 45px; display: flex; justify-content: center; }
.winbtns svg { width: 12px; height: 12px; stroke: #000; stroke-width: 1; }
.menubar { display: flex; align-items: center; height: 25px; border-bottom: 1px solid var(--sage); padding-left: 10px; gap: 13px; color: #8a958d; }
.menubar a:nth-of-type(1) { margin-left: -5px; }
.menuicon { width: 14px; height: 16px; stroke-width: 1; }
.mdibtns { margin-left: auto; display: flex; gap: 1px; margin-right: -2px; }
.mdibtns button { width: 35px; height: 19px; border: 1px solid var(--face); display: grid; place-items: center; }
.mdibtns svg { width: 14px; height: 12px; stroke-width: 1; }

.toolbar { display: flex; align-items: center; background: #fff; }
.toolbar.top { height: 32px; padding: 0 5px 0 7px; }
.tb { flex: 1 1 0; min-width: 0; height: 28px; display: grid; place-items: center; border: 1px solid transparent; }
.tb.fixed { flex: none; width: 30px; }
.tb svg { width: 22px; height: 22px; }
.on { background: #ececec; border: 1px dotted var(--sage); }
.drop { width: 15px; height: 28px; color: #000; font-size: 14px; text-align: center; flex: none; }
.sep { width: 1px; height: 26px; margin: 0 3px; background: var(--sage); flex: none; }
.sep2 { width: 4px; height: 32px; margin: 0 6px; border-left: 1px dotted var(--sage); border-right: 1px dotted var(--sage); flex: none; }
.more { width: 29px; text-align: right; align-self: flex-start; }

.trader { display: flex; height: 79px; background: #f0f0f0; }
.strip { width: 18px; margin: 2px 2px 0; background: var(--dither); text-align: center; color: #000; }
.tradermain { flex: 1; display: flex; flex-direction: column; }
.tabstrip { height: 24px; padding-top: 3px; display: flex; }
.tab { width: 78px; display: flex; align-items: center; gap: 7px; padding-left: 8px; background: #fff; font-size: 11px; }
.tab svg { width: 10px; height: 10px; }
.tab svg, .tbtn svg { stroke: #222; }
.orderbar { flex: 1; display: flex; align-items: flex-start; gap: 12px; background: #fff; padding: 11px 0 0 12px; border-bottom: 3px solid #ebebeb; font-size: 11px; }
.pair { display: flex; gap: 6px; }
.pair:last-child { margin: -6px 0 0 6px; }
.field { display: flex; align-items: center; border: 1px solid var(--sage); background: #fff; height: 24px; }
.field input { flex: 1; min-width: 0; padding-left: 3px; outline: 0; }
.search { width: 110px; }
.search svg { width: 16px; height: 16px; margin-right: 2px; }
.spin > svg { width: 12px; height: 14px; margin-right: 6px; }
.updown { display: flex; flex-direction: column; width: 16px; height: 20px; border: 1px solid var(--sage); margin-right: 1px; }
.updown button { flex: 1; display: grid; place-items: center; background: #f3f3f3; }
.updown button + button { border-top: 1px solid var(--soft); }
.updown svg { width: 8px; height: 4px; fill: #000; stroke: none; }
.sel { appearance: none; height: 24px; padding: 0 18px 3px 3px; border: 1px solid #aeb8b0; outline: 0;
  background: url("data:image/svg+xml,%3Csvg xmlns='http://www.w3.org/2000/svg' width='10' height='6'%3E%3Cpath d='M1 1l4 4 4-4' fill='none' stroke='%238c988f' stroke-width='1.500'/%3E%3C/svg%3E") no-repeat right 5px center, #dde0dd; }
.sel.short { height: 20px; }
.sel.acct { font-size: 10px; padding-right: 14px; background-position: right 2px center; }
.sel.white { background-color: #fff; }
.sel.gray { background: var(--dither); opacity: 1; color: #6f7972; border-color: var(--sage); }
.w52 { width: 52px; } .w55 { width: 55px; } .w65 { width: 65px; } .w67 { width: 67px; } .w76 { width: 76px; } .w85 { width: 85px; }
.w95 { width: 95px; } .w96 { width: 96px; } .w99 { width: 99px; } .w130 { width: 130px; } .w159 { width: 159px; } .w165 { width: 165px; }
.pricebtn { width: 90px; height: 22px; background: var(--dither); display: flex; align-items: center; color: #333; }
.pricebtn span { flex: 1; }
.pricebtn b { width: 10px; background: var(--sage); align-self: stretch; line-height: 22px; }
.bigbtn { width: 61px; height: 37px; background: var(--dither); color: #222; line-height: 14px; border: 1px solid #b0b9b2; }
.bigbtn b { display: block; font-weight: 400; }

.workspace { flex: 1; display: flex; min-height: 0; border-top: 1px solid var(--sage); }
.datawin { width: 170px; background: var(--black); border: 1px solid var(--sage); border-width: 0 2px 1px 2px; color: #b4beb6; font: 11px/12px "Liberation Sans", "Noto Sans CJK SC", sans-serif; }
.dwhead { height: 21px; display: flex; align-items: center; justify-content: space-between; background: var(--soft); color: var(--ink); padding: 0 5px 0 3px; border-bottom: 2px solid #e6e9e7; font-size: 12px; }
.dwhead button { color: #000; }
.datawin table { width: 100%; height: 218px; border-collapse: collapse; }
.datawin th, .datawin td { padding: 0 3px; line-height: 12px; font-weight: 400; text-align: left; white-space: nowrap; }
.datawin th { font-size: 12px; width: 52px; border-right: 1px dotted #6d756f; }
.datawin td { text-align: right; }
.datawin .g { background: #525854; }
.datawin .g th { border: 0; color: #b4beb6; }
.dim { opacity: .6; }

.center { flex: 1; display: flex; flex-direction: column; min-width: 0; }
.upper { flex: 1; display: flex; min-height: 0; }
.chart { flex: 1; display: flex; flex-direction: column; min-width: 0; border-right: 2px solid var(--sage); border-left: 1px solid #e6e9e7; }
.plotrow { flex: 1; display: flex; min-height: 0; background: var(--black); color: #a9b3ab; font: 11px/12px "Liberation Sans", "Noto Sans CJK SC", sans-serif; }
.plot { flex: 1; display: flex; flex-direction: column; min-width: 0; }
.legend { height: 19px; display: flex; align-items: center; gap: 7px; padding-left: 9px; white-space: nowrap; }
.tag { background: var(--sage); color: #2e3330; padding: 0 4px; height: 13px; }
.bx { border: 1px solid var(--sage); height: 13px; line-height: 11px; padding: 0 2px; }
.legend2 { display: flex; gap: 7px; margin-left: auto; padding-right: 132px; }
.candles { flex: 1; min-height: 0; width: 100%; }
.wick { stroke: var(--sage); stroke-width: 1; }
.down { fill: var(--sage); stroke: none; }
.up { fill: #565d58; stroke: none; }
.ma { stroke: #7a827c; stroke-width: 1; stroke-dasharray: 1 7; }
.times { fill: #a9b3ab; stroke: none; }
.axis { width: 51px; border-left: 1px dotted var(--sage); position: relative; padding: 43px 0 16px 6px; display: flex; flex-direction: column; }
.axis ol { list-style: none; margin: 0; padding: 0; flex: 1; display: flex; flex-direction: column; }
.axis li { flex: 1; display: flex; align-items: center; }
.cut { height: 6px; margin-top: 10px; overflow: hidden; line-height: 12px; }
.ptag { position: absolute; right: 0; width: 48px; height: 12px; padding-left: 5px; background: var(--sage); color: #2e3330; clip-path: polygon(0 50%, 6px 0, 100% 0, 100% 100%, 6px 100%); }
.t1 { top: 428px; }
.t2 { top: 470px; }
.count { position: absolute; right: 0; top: 482px; width: 33px; background: #646b66; color: #c3cbc5; padding-left: 3px; }
.hscroll { height: 17px; display: flex; align-items: center; justify-content: space-between; background: #f1f1f1; padding: 0 5px; color: #222; }
.hscroll button { font-size: 16px; line-height: 12px; }
.hscroll span { width: 27px; height: 14px; margin: 0 7px 0 auto; background: var(--dither); }

.dom { width: 209px; background: var(--face); padding: 9px 2px 0 5px; font-size: 11px; }
.domtop { display: flex; gap: 6px; align-items: flex-start; height: 30px; }
.domtop .sel { flex: 1; min-width: 0; color: #59605b; }
.domtop .x { padding: 6px 5px 0 2px; }
.x svg { width: 14px; height: 14px; stroke-width: 2; }
.tbtn { width: 33px; height: 24px; border: 1px solid #b6bfb8; display: flex; align-items: center; justify-content: space-around; background: #e6e8e6; color: #000; }
.tbtn svg { width: 10px; height: 10px; }
.domgrid { display: grid; grid-template-columns: 63px 1fr 64px; grid-template-rows: 26px 36px 36px 26px 26px; gap: 4px; padding-left: 1px; }
.b { background: var(--dither); color: #4a504c; line-height: 14px; border: 1px solid #b0b9b2; white-space: nowrap; }
.b b { display: block; color: #111; font-weight: 600; font-size: 13px; }
.b:disabled { color: #929d95; }
.c3 { grid-column: 3; }
.pos { grid-row: 1 / 3; grid-column: 2; margin: 2px 2px 14px; border: 1px dotted var(--sage); display: flex; flex-direction: column; justify-content: space-around; text-align: center; color: #111; font-size: 13px; white-space: nowrap; }
.domqty { display: flex; gap: 2px; margin-top: 8px; }
.domqty .sel { padding-right: 12px; }
.domqty .sel:nth-of-type(1) { width: 43px; }
.domqty .white { flex: 1; min-width: 0; border-color: #e6e6e6; font-size: 10px; padding-right: 14px; background-position: right 3px center; }
.dom h3 { font-size: 12px; line-height: 20px; margin: 19px 0 2px 1px; }
.palette { background: #fff; height: 228px; margin: 0 -2px 0 2px; padding: 7px 0 0 14px; display: grid; grid-template-columns: repeat(4, 28px); gap: 10px 24px; align-content: start; overflow: hidden; }
.palette svg { width: 28px; height: 34px; stroke-width: 1; }
.palette + h3 { margin: 10px 0 2px 1px; }

.sheets { height: 20px; display: flex; background: #e4e7e4; border-top: 1px solid var(--sage); font-size: 12px; color: #222; }
.nav { width: 80px; display: flex; justify-content: space-around; background: #f6f6f6; font-size: 10px; }
.sheet { padding: 0 11px; line-height: 18px; background: var(--dither); clip-path: polygon(0 0, calc(100% - 8px) 0, 100% 100%, 8px 100%); white-space: nowrap; }
.sheet.cur { background: #fff; clip-path: polygon(0 0, 100% 0, calc(100% - 8px) 100%, 8px 100%); padding: 0 16px 0 8px; }

.toolbar.bottom { height: 38px; padding-left: 8px; padding-right: 128px; border-bottom: 1px dotted var(--sage); }
.draw { flex: 1; display: flex; align-items: center; }
.quick { margin-right: 7px; }
.jump, .mode { display: flex; align-items: center; gap: 1px; width: 60px; justify-content: center; }
.mode { width: 88px; color: var(--sage); }
.jump svg, .mode svg { width: 22px; height: 22px; }
.play { display: flex; width: 161px; justify-content: space-around; color: #222; font-size: 11px; }
.slider { width: 98px; appearance: none; height: 18px; background: linear-gradient(var(--soft), var(--soft)) no-repeat center / 90px 4px; }
.slider::-webkit-slider-thumb { appearance: none; width: 7px; height: 18px; background: var(--sage); }
.date svg { width: 14px; height: 14px; }
.date b { color: #333; font-weight: 400; width: 13px; text-align: center; }
.status { height: 24px; background: #f0f0f0; display: flex; align-items: center; padding: 2px 13px 0 2px; }
.clock { margin-left: auto; padding-top: 8px; }
.grip { width: 16px; height: 16px; margin-left: 40px; background: #59605b; }

.dialog { position: absolute; left: 648px; top: 117px; width: 551px; height: 850px; display: flex; flex-direction: column; background: var(--face); border: 1px solid var(--sage); border-bottom-width: 2px; box-shadow: 2px 4px 14px #6f797288; }
.dialog header { height: 30px; background: #fff; display: flex; align-items: center; padding: 0 17px 0 9px; gap: 35px; color: #000; }
.dialog header h2 { flex: 1; }
.dialog header button { font-size: 15px; }
.dialog header svg { width: 12px; height: 12px; stroke: #000; }
.dtabs { display: flex; align-items: flex-end; height: 32px; padding-left: 5px; }
.dtabs a { padding: 0 10px 0 9px; line-height: 20px; }
.dtabs a.cur { background: #fff; line-height: 23px; }
.dpage { flex: 1; background: #fff; margin: 0 9px 0 8px; padding: 9px 0 0 14px; }
.row { display: flex; align-items: center; height: 21px; }
.rows { display: grid; gap: 4px; margin: -2px 0 2px; }
.dpage .sel, .dpage .field, .txt { height: 21px; }
.lab { width: 124px; padding-left: 20px; }
.txt { border: 1px solid var(--sage); padding-left: 3px; outline: 0; }
.dialog hr { border: 0; border-top: 1px solid var(--sage); margin: 0 113px 0 0; flex: 1; }
.head1 label { margin: 0 6px 0 10px; }
.period { margin-top: 12px; gap: 9px; }
.period .lab { width: 115px; }
.perbox { position: relative; display: flex; }
.ibeam { position: absolute; right: 18px; top: 8px; width: 8px; height: 16px; stroke: #000; stroke-width: 1; }
.brk { margin: 106px 0 0 124px; }
.dis, .off label { color: #8f9a92; }
.row label, .sect label { display: flex; align-items: center; white-space: nowrap; }
.chk { appearance: none; width: 13px; height: 13px; border: 1px solid #8a958d; margin-right: 3px; display: grid; place-items: center; }
.chk:checked::after { content: "✓"; font-size: 11px; line-height: 11px; }
.chk:disabled { border-color: #d3d8d4; color: #c3cbc5; }
.sect { display: flex; align-items: center; height: 23px; }
.brk + .sect { margin-top: -2px; }
.dialog .a { margin-left: 27px; }
.dialog .b1 { margin-left: 17px; }
.dialog .d { margin-left: 10px; }
.rad { appearance: none; width: 13px; height: 13px; border: 1px solid #6f7972; border-radius: 50%; margin: 0 17px 0 20px; }
.rad:checked { background: radial-gradient(#333 40%, #fff 45%); }
.range .w55 { margin-right: 19px; }
.from { padding-left: 9px; }
.to { width: 41px; padding-left: 7px; }
.off .field { color: #8f9a92; }
.date input { font-size: 11px; padding-left: 1px; }
.pin { width: 14px; height: 10px; margin-left: 17px; stroke: #6f7972; stroke-width: 1; }
.row.tall { height: 52px; align-items: flex-start; }
.list { width: 159px; height: 52px; border: 1px solid var(--sage); display: flex; overflow: hidden; }
.list select { flex: 1; height: 52px; overflow: hidden; outline: 0; appearance: none; scrollbar-width: none; }
.list option { padding: 0 3px; height: 13px; min-height: 13px; line-height: 11px; }
.list option:checked { background: linear-gradient(var(--sage), var(--sage)); color: #dfe4e0; }
.vs { width: 17px; background: var(--face); display: flex; flex-direction: column; justify-content: space-between; align-items: center; padding: 8px 0; }
.vs svg { width: 10px; height: 6px; stroke: #333; }
.dbtns { height: 46px; display: flex; justify-content: flex-end; gap: 8px; padding: 10px 6px 8px; }
.dbtns button { width: 90px; background: #dde0dd; border: 1px solid var(--sage); color: #222; }
.dbtns .ok { border-width: 3px; }

.watermark { position: absolute; left: 1582px; top: 962px; width: 320px; display: flex; gap: 24px; align-items: center; color: #fff; font-size: 36px; line-height: 50px; text-shadow: 0 0 2px #c9cfca; opacity: .85; }
.watermark b { font-size: 40px; }
.ime { position: absolute; left: 1697px; top: 1012px; height: 32px; width: 180px; display: flex; align-items: center; gap: 6px; color: #8a958d; }
.ime::before { content: ""; position: absolute; inset: 4px 2px 3px 12px; background: #fff; border: 1px solid #e6e6e6; }
.ime > * { position: relative; }
.ime svg { width: 18px; height: 18px; }
.ime .slogo { width: 32px; height: 32px; }
.ime b { font-size: 16px; width: 18px; }
```
